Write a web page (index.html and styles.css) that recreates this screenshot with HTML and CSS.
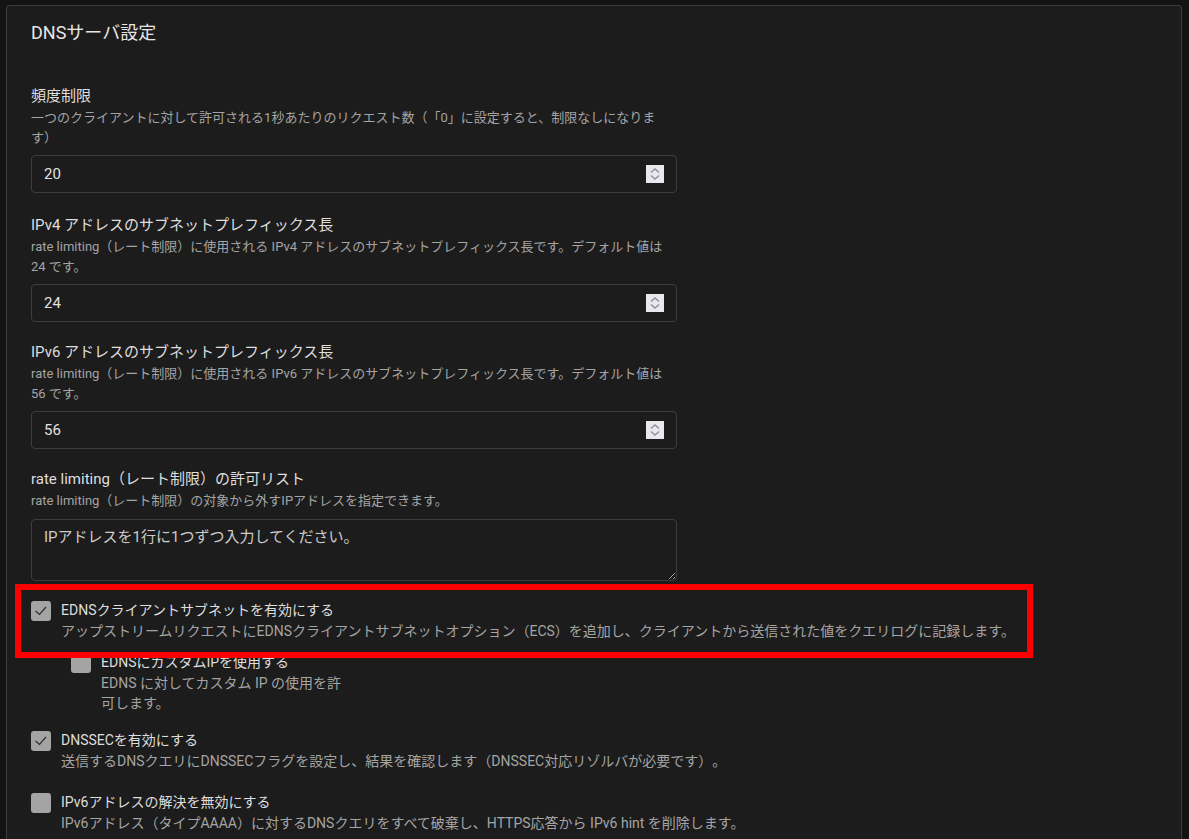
FILE: index.html
```html
<!DOCTYPE html>
<html lang="ja">
<head>
<meta charset="utf-8">
<title>DNSサーバ設定</title>
<link rel="stylesheet" href="styles.css">
</head>
<body>
<div class="card">
  <div class="card-header">
    <h2 class="card-title">DNSサーバ設定</h2>
  </div>
  <div class="card-body">
    <div class="field first">
      <div class="field-label">頻度制限</div>
      <div class="field-desc">一つのクライアントに対して許可される1秒あたりのリクエスト数（「0」に設定すると、制限なしになります）</div>
      <div class="num-input">
        <input class="num-value" type="text" value="20">
        <span class="spinner"><svg width="18" height="18" viewBox="0 0 18 18"><polyline points="5,7.5 9,4 13,7.5" fill="none" stroke="#8f8f96" stroke-width="1.4"/><polyline points="5,10.5 9,14 13,10.5" fill="none" stroke="#8f8f96" stroke-width="1.4"/></svg></span>
      </div>
    </div>
    <div class="field">
      <div class="field-label">IPv4 アドレスのサブネットプレフィックス長</div>
      <div class="field-desc">rate limiting（レート制限）に使用される IPv4 アドレスのサブネットプレフィックス長です。デフォルト値は 24 です。</div>
      <div class="num-input">
        <input class="num-value" type="text" value="24">
        <span class="spinner"><svg width="18" height="18" viewBox="0 0 18 18"><polyline points="5,7.5 9,4 13,7.5" fill="none" stroke="#8f8f96" stroke-width="1.4"/><polyline points="5,10.5 9,14 13,10.5" fill="none" stroke="#8f8f96" stroke-width="1.4"/></svg></span>
      </div>
    </div>
    <div class="field">
      <div class="field-label">IPv6 アドレスのサブネットプレフィックス長</div>
      <div class="field-desc">rate limiting（レート制限）に使用される IPv6 アドレスのサブネットプレフィックス長です。デフォルト値は 56 です。</div>
      <div class="num-input">
        <input class="num-value" type="text" value="56">
        <span class="spinner"><svg width="18" height="18" viewBox="0 0 18 18"><polyline points="5,7.5 9,4 13,7.5" fill="none" stroke="#8f8f96" stroke-width="1.4"/><polyline points="5,10.5 9,14 13,10.5" fill="none" stroke="#8f8f96" stroke-width="1.4"/></svg></span>
      </div>
    </div>
    <div class="field last">
      <div class="field-label">rate limiting（レート制限）の許可リスト</div>
      <div class="field-desc">rate limiting（レート制限）の対象から外すIPアドレスを指定できます。</div>
      <textarea class="text-area" placeholder="IPアドレスを1行に1つずつ入力してください。"></textarea>
    </div>

    <div class="check-item first">
      <span class="cb"><svg width="20" height="20" viewBox="0 0 20 20"><polyline points="4.5,10 8.5,13.5 15,6" fill="none" stroke="#2e2e2e" stroke-width="1.2"/></svg></span>
      <div class="check-text">
        <div class="check-label">EDNSクライアントサブネットを有効にする</div>
        <div class="check-desc">アップストリームリクエストにEDNSクライアントサブネットオプション（ECS）を追加し、クライアントから送信された値をクエリログに記録します。</div>
      </div>
      <span class="annotation"></span>
    </div>
    <div class="check-item nested">
      <span class="cb"></span>
      <div class="check-text narrow">
        <div class="check-label">EDNSにカスタムIPを使用する</div>
        <div class="check-desc">EDNS に対してカスタム IP の使用を許可します。</div>
      </div>
    </div>
    <div class="check-item after-nested">
      <span class="cb"><svg width="20" height="20" viewBox="0 0 20 20"><polyline points="4.5,10 8.5,13.5 15,6" fill="none" stroke="#2e2e2e" stroke-width="1.2"/></svg></span>
      <div class="check-text">
        <div class="check-label">DNSSECを有効にする</div>
        <div class="check-desc">送信するDNSクエリにDNSSECフラグを設定し、結果を確認します（DNSSEC対応リゾルバが必要です）。</div>
      </div>
    </div>
    <div class="check-item">
      <span class="cb"></span>
      <div class="check-text">
        <div class="check-label">IPv6アドレスの解決を無効にする</div>
        <div class="check-desc">IPv6アドレス（タイプAAAA）に対するDNSクエリをすべて破棄し、HTTPS応答から IPv6 hint を削除します。</div>
      </div>
    </div>
  </div>
</div>
</body>
</html>
```

FILE: styles.css
```css
* { box-sizing: border-box; }

html, body {
  margin: 0;
  padding: 0;
  background: #131313;
  height: 100%;
  overflow: hidden;
}

body {
  font-family: Roboto, "Noto Sans CJK JP", sans-serif;
  color: #e2e2e2;
  padding: 5px 7px 0 6px;
  text-spacing-trim: space-all;
}

.card {
  background: #1c1c1c;
  border: 1px solid #3c3c3c;
  border-radius: 3px;
  min-height: 900px;
}

.card-header {
  padding: 15px 24px 0 24px;
}

.card-title {
  margin: 0;
  font-size: 18px;
  font-weight: 400;
  line-height: 24px;
  color: #e6e6e6;
}

.card-body {
  padding: 41px 24px 0 24px;
  display: flex;
  flex-direction: column;
}

.field {
  width: 646px;
  margin-bottom: 20px;
}

.field.first {
  margin-bottom: 22px;
}

.field.last {
  margin-bottom: 19px;
}

.field-label {
  font-size: 15px;
  line-height: 20px;
  color: #dedede;
}

.field-desc {
  margin-top: 2px;
  font-size: 13px;
  line-height: 19.5px;
  color: #a4a4a4;
}

.num-input {
  margin-top: 8px;
  height: 38px;
  display: flex;
  align-items: center;
  border: 1px solid #3d3d3d;
  border-radius: 4px;
  padding: 0 12px;
  background: #1c1c1c;
}

.num-value {
  flex: 1;
  min-width: 0;
  border: none;
  outline: none;
  background: transparent;
  color: #e2e2e2;
  font-family: Roboto, "Noto Sans CJK JP", sans-serif;
  font-size: 15px;
  padding: 0;
}

.spinner {
  width: 18px;
  height: 18px;
  background: #e9e9ed;
  display: flex;
}

.text-area {
  display: block;
  margin-top: 8px;
  width: 646px;
  height: 62px;
  border: 1px solid #3d3d3d;
  border-radius: 4px;
  background: #1c1c1c;
  color: #e2e2e2;
  padding: 7px 12px;
  font-family: Roboto, "Noto Sans CJK JP", sans-serif;
  font-size: 15px;
  line-height: 20px;
  resize: vertical;
  color-scheme: dark;
  outline: none;
}

.text-area::placeholder {
  color: #cccccc;
  opacity: 1;
}

.check-item {
  position: relative;
  display: flex;
  gap: 10px;
  margin-top: 21px;
}

.check-item.first {
  margin-top: 0;
}

.check-item.nested {
  margin-left: 40px;
  margin-top: 11px;
}

.check-item.after-nested {
  margin-top: 17px;
}

.cb {
  flex: none;
  width: 20px;
  height: 20px;
  margin-top: 1px;
  border-radius: 3px;
  background: #a4a4a4;
  display: flex;
}

.check-label {
  font-size: 14px;
  line-height: 20px;
  color: #dedede;
}

.check-desc {
  margin-top: 1px;
  font-size: 14px;
  line-height: 20px;
  color: #a4a4a4;
}

.check-text.narrow {
  max-width: 250px;
}

.annotation {
  position: absolute;
  left: -16px;
  top: -16px;
  width: 1018px;
  height: 74px;
  border: 6px solid #ff0000;
  pointer-events: none;
  z-index: 2;
}
```
